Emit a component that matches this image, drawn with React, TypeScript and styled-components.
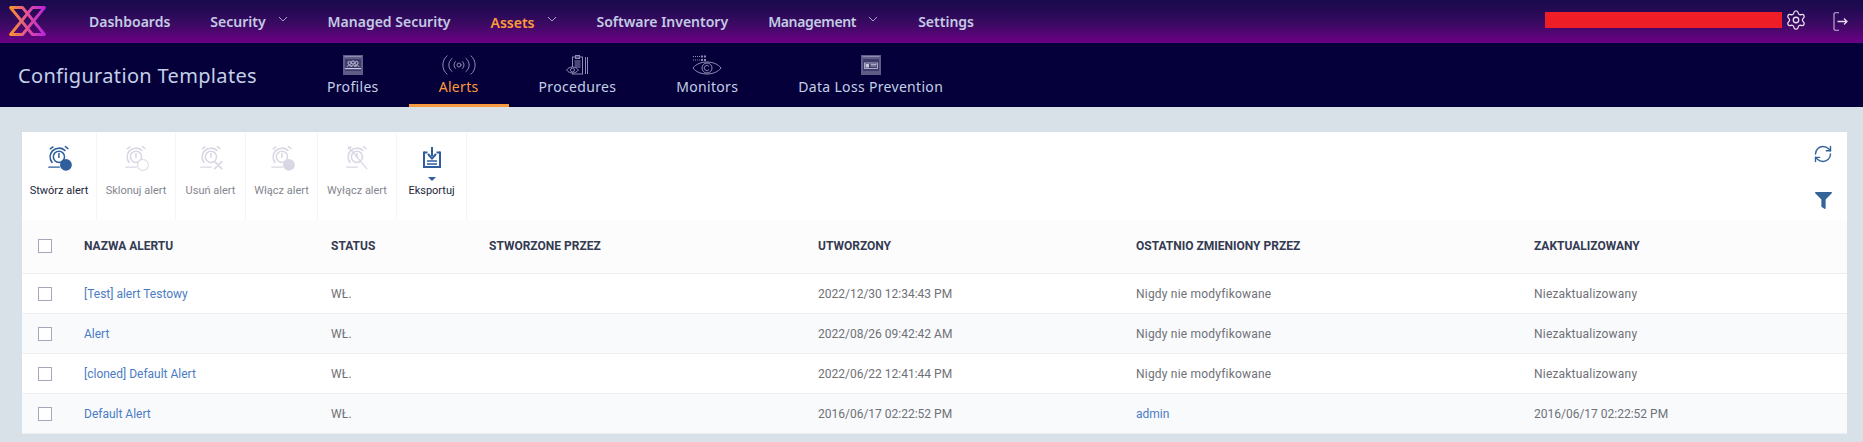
import React from "react";
import styled, { createGlobalStyle } from "styled-components";
import { Settings, RefreshCw } from "lucide-react";
import { FaFilter } from "react-icons/fa";

const Global = createGlobalStyle`
  html, body { margin: 0; padding: 0; background: #d8e0e8; height: 442px; overflow: hidden; }
  * { box-sizing: border-box; }
`;

const TopBar = styled.header`
  height: 43px;
  display: flex;
  align-items: center;
  padding: 0 15px 0 8px;
  background: linear-gradient(180deg, #1a0a4c 0%, #1e0a50 15%, #3a0a62 55%, #6c0086 100%);
`;
const Nav = styled.nav`
  display: flex;
  align-items: center;
  gap: 40px;
  margin-left: 42px;
`;
const NavItem = styled.div<{ $active?: boolean; $tight?: boolean }>`
  display: flex;
  align-items: center;
  font: 600 14px "Noto Sans", sans-serif;
  letter-spacing: ${(p) => (p.$tight ? "-0.35px" : "0")};
  color: ${(p) => (p.$active ? "#ff9a3a" : "#c3cbe4")};
  white-space: nowrap;
  padding-top: ${(p) => (p.$active ? 1 : 0)}px;
`;
const Chevron = styled.svg`
  width: 10px;
  height: 6px;
  margin: -6px 0 0 12px;
`;
const TopRight = styled.div`
  margin-left: auto;
  display: flex;
  align-items: center;
`;
const Redaction = styled.div`
  width: 237px;
  height: 16px;
  margin-top: -3px;
  background: #ef1e26;
`;
const GearWrap = styled.div`
  display: flex;
  margin: -3px 26px 0 3px;
  color: #e6e0ef;
`;
const LogoutWrap = styled.svg`
  width: 15px;
  height: 19px;
  margin-top: -1px;
`;

const SubBar = styled.div`
  height: 64px;
  display: flex;
  background: #05003a;
`;
const Title = styled.div`
  width: 297px;
  padding: 19px 0 0 18px;
  font: 400 20px "Noto Sans", sans-serif;
  letter-spacing: 0.33px;
  color: #c3d0e6;
  white-space: nowrap;
`;
const Tabs = styled.div`
  display: flex;
`;
const Tab = styled.div<{ $active?: boolean }>`
  display: flex;
  flex-direction: column;
  align-items: center;
  padding: 12px 30px 0;
  height: 64px;
  font: 400 14px "Noto Sans", sans-serif;
  letter-spacing: 0.32px;
  white-space: nowrap;
  color: ${(p) => (p.$active ? "#ff9a3a" : "#c3d0e6")};
  border-bottom: 3px solid ${(p) => (p.$active ? "#f99a3e" : "transparent")};
`;
const TabIcon = styled.svg`
  height: 20px;
  margin-bottom: 2px;
  display: block;
`;

const Main = styled.main`
  padding: 25px 16px 0 22px;
`;
const Card = styled.section`
  background: #fff;
  height: 302px;
`;
const Toolbar = styled.div`
  height: 88px;
  display: flex;
  justify-content: space-between;
`;
const Tools = styled.div`
  display: flex;
`;
const Tool = styled.div<{ $w: number; $off?: boolean }>`
  width: ${(p) => p.$w}px;
  border-right: 1px solid #f5f5f7;
  display: flex;
  flex-direction: column;
  align-items: center;
  padding-top: 14px;
  font: 400 11px Roboto, sans-serif;
  white-space: nowrap;
  color: ${(p) => (p.$off ? "#84868f" : "#23263a")};
`;
const ToolGlyph = styled.svg`
  width: 26px;
  height: 26px;
  display: block;
`;
const AlarmGlyph = styled(ToolGlyph)`
  width: 28px;
  height: 28px;
  margin: -1px 0 -1px 2px;
`;
const ToolLabel = styled.span<{ $near?: boolean }>`
  margin-top: ${(p) => (p.$near ? 3 : 12)}px;
`;
const SideActions = styled.div`
  display: flex;
  flex-direction: column;
  align-items: center;
  gap: 28px;
  padding: 12px 14px 0 0;
  color: #356499;
`;

const Row = styled.div<{ $head?: boolean; $stripe?: boolean }>`
  display: grid;
  grid-template-columns: 62px 247px 158px 329px 318px 398px 1fr;
  height: ${(p) => (p.$head ? 54 : 40)}px;
  align-items: ${(p) => (p.$head ? "start" : "center")};
  padding-top: ${(p) => (p.$head ? 19 : 0)}px;
  background: ${(p) => (p.$head ? "#fcfcfc" : p.$stripe ? "#f9fafc" : "#fff")};
  border-bottom: 1px solid #eceef1;
  font: ${(p) => (p.$head ? "700 12px" : "400 12px")} Roboto, sans-serif;
  color: ${(p) => (p.$head ? "#343a52" : "#6f7177")};
`;
const Box = styled.span`
  display: block;
  width: 14px;
  height: 14px;
  margin-left: 16px;
  background: #fff;
  border: 1px solid #a3a8ba;
`;
const Link = styled.span`
  color: #4a7cc4;
`;
const Wide = styled.span`
  letter-spacing: 0.2px;
`;

const gl = "#8f8cb4";

const ProfilesIcon = () => (
  <TabIcon viewBox="0 0 20 20" width="20">
    <rect x="0" y="0" width="20" height="20" fill="#5f5c88" />
    <rect x="1.5" y="1" width="17" height="1" fill="#8f8cb4" />
    <rect x="2" y="4" width="16" height="12" fill="#3e3b6c" />
    <g fill="none" stroke="#c8c6da" strokeWidth="0.9">
      <circle cx="6.5" cy="8" r="1.6" /><circle cx="10" cy="7.5" r="1.6" /><circle cx="13.5" cy="8" r="1.6" />
      <path d="M4 12c0-2 5-2 5 0M8 12c0-2.4 5-2.4 5 0M11.5 12c0-2 4.5-2 4.5 0" />
    </g>
    <rect x="2" y="13" width="16" height="1.2" fill="#c8c6da" />
  </TabIcon>
);
const AlertsIcon = () => (
  <TabIcon viewBox="0 0 34 20" width="34" fill="none" stroke={gl} strokeWidth="1" strokeLinecap="round">
    <circle cx="17" cy="10" r="2" />
    <path d="M13.5 6.5a4.5 4.5 0 0 0 0 7M20.5 6.5a4.5 4.5 0 0 1 0 7" />
    <path d="M10 3.5a8 8 0 0 0 0 13M24 3.5a8 8 0 0 1 0 13" />
    <path d="M5 .8a12 12 0 0 0 0 18.4M29 .8a12 12 0 0 1 0 18.4" />
  </TabIcon>
);
const ProceduresIcon = () => (
  <TabIcon viewBox="0 0 22 20" width="22" fill="none" stroke={gl} strokeWidth="1">
    <rect x="6.5" y="2" width="10" height="17" />
    <rect x="9.5" y="0.5" width="4" height="3" />
    <path d="M8.5 6h6M8.5 8h6M8.5 10h6M8.5 12h6" />
    <path d="M19.5 2v17M21.5 2v17" />
    <path d="M0.5 15c3-4 9-4 12 0c-3 4-9 4-12 0z" fill="#05003a" />
    <circle cx="6.5" cy="15" r="2" />
  </TabIcon>
);
const MonitorsIcon = () => (
  <TabIcon viewBox="0 0 30 20" width="30" fill="none" stroke={gl} strokeWidth="1">
    <path d="M1 1.5h7M1 5h7" strokeDasharray="1 1" />
    <path d="M9 1.5h5M9 5h5" strokeWidth="2" strokeDasharray="2 1" />
    <path d="M1 13c6-8 22-8 28 0c-6 8-22 8-28 0z" />
    <circle cx="15" cy="13" r="5" />
    <path d="M17 11.5a2.6 2.6 0 1 0 0 3" />
  </TabIcon>
);
const DlpIcon = () => (
  <TabIcon viewBox="0 0 20 20" width="20">
    <rect x="0" y="0" width="20" height="20" fill="#5f5c88" />
    <rect x="1.5" y="1" width="17" height="1" fill="#8f8cb4" />
    <rect x="2" y="4" width="16" height="12" fill="#3e3b6c" />
    <rect x="3.5" y="8" width="13" height="5.5" fill="none" stroke="#c8c6da" strokeWidth="0.8" />
    <rect x="4.5" y="9" width="3.5" height="3.5" fill="#c8c6da" />
    <path d="M9.5 9.5h6M9.5 11h6" stroke="#c8c6da" strokeWidth="0.8" />
  </TabIcon>
);

type Mark = "solid" | "dashed" | "cross" | "grey" | "strike";

const AlarmIcon = ({ mark, c }: { mark: Mark; c: string }) => (
  <AlarmGlyph viewBox="0 0 26 26" fill="none" stroke={c} strokeWidth="1.4" strokeLinecap="round">
    <circle cx="12" cy="11" r="5.2" />
    <path d="M5.5 16a8.5 8.5 0 0 1 .5-10.5a8.5 8.5 0 0 1 11.5-.5" strokeWidth="1.6" />
    <path d="M4 3.5L6.5 1.8M18 1.5l2.4 1.8" />
    <path d="M12 8v3.5" strokeWidth="1.4" />
    <path d="M2.5 20.5h10" strokeWidth="1.2" />
    {mark === "solid" && <circle cx="18.5" cy="18.5" r="5.5" fill={c} stroke="none" />}
    {mark === "grey" && <circle cx="18.5" cy="18.5" r="5.5" fill={c} stroke="none" />}
    {mark === "dashed" && (
      <circle cx="18.5" cy="18.5" r="5" fill="#fff" strokeWidth="1" strokeDasharray="1.2 1" />
    )}
    {mark === "cross" && <path d="M15.5 15.5l6.5 6.5M22 15.5l-6.5 6.5" strokeWidth="1.6" />}
    {mark === "strike" && <path d="M4 1.5L21 22" strokeWidth="1.2" />}
  </AlarmGlyph>
);

const ExportIcon = () => (
  <ToolGlyph viewBox="0 0 26 26">
    <path d="M5 6.5h3.5M17.5 6.5H21" stroke="#2e5f9c" strokeWidth="2" fill="none" />
    <path d="M5 5.5V21h16V5.5" stroke="#2e5f9c" strokeWidth="2" fill="none" />
    <path d="M13 1v9" stroke="#2e5f9c" strokeWidth="2" />
    <path d="M9 8l4 4.5L17 8" stroke="#2e5f9c" strokeWidth="2" fill="none" />
    <path d="M8 15h10M8 18h10" stroke="#2e5f9c" strokeWidth="1.4" />
    <path d="M4 21h18" stroke="#2e5f9c" strokeWidth="2" />
  </ToolGlyph>
);
const Caret = styled.svg`
  width: 8px;
  height: 4px;
  margin-top: 5px;
  display: block;
`;

const LogoMark = styled.svg`
  width: 39px;
  height: 32px;
  margin-top: -1px;
`;
const Logo = () => (
  <LogoMark viewBox="0 0 39 32" fill="none">
    <defs>
      <linearGradient id="lg" x1="0" y1="0" x2="39" y2="0" gradientUnits="userSpaceOnUse">
        <stop offset="0" stopColor="#ff9c18" />
        <stop offset="0.5" stopColor="#e0509a" />
        <stop offset="1" stopColor="#b41ee6" />
      </linearGradient>
    </defs>
    <path d="M2.5 2.5h12L36.5 29.5h-12z" stroke="url(#lg)" strokeWidth="2.8" strokeLinejoin="round" />
    <path d="M36.5 2.5h-12L2.5 29.5h12z" stroke="url(#lg)" strokeWidth="2.8" strokeLinejoin="round" />
  </LogoMark>
);

const chev = (
  <Chevron viewBox="0 0 10 6" fill="none" stroke="#c3cbe4" strokeWidth="0.8">
    <path d="M1 1l4 4 4-4" />
  </Chevron>
);

const tools: { label: string; w: number; mark: Mark }[] = [
  { label: "Stwórz alert", w: 75, mark: "solid" },
  { label: "Sklonuj alert", w: 79, mark: "dashed" },
  { label: "Usuń alert", w: 70, mark: "cross" },
  { label: "Włącz alert", w: 72, mark: "grey" },
  { label: "Wyłącz alert", w: 79, mark: "strike" },
];

const rows = [
  ["[Test] alert Testowy", "2022/12/30 12:34:43 PM", "Nigdy nie modyfikowane", "Niezaktualizowany"],
  ["Alert", "2022/08/26 09:42:42 AM", "Nigdy nie modyfikowane", "Niezaktualizowany"],
  ["[cloned] Default Alert", "2022/06/22 12:41:44 PM", "Nigdy nie modyfikowane", "Niezaktualizowany"],
  ["Default Alert", "2016/06/17 02:22:52 PM", "admin", "2016/06/17 02:22:52 PM"],
];

export default function App() {
  return (
    <>
      <Global />
      <TopBar>
        <Logo />
        <Nav>
          <NavItem>Dashboards</NavItem>
          <NavItem>Security{chev}</NavItem>
          <NavItem>Managed Security</NavItem>
          <NavItem $active>Assets{chev}</NavItem>
          <NavItem>Software Inventory</NavItem>
          <NavItem $tight>Management{chev}</NavItem>
          <NavItem>Settings</NavItem>
        </Nav>
        <TopRight>
          <Redaction />
          <GearWrap><Settings size={22} strokeWidth={1.4} /></GearWrap>
          <LogoutWrap viewBox="0 0 15 19" fill="none" stroke="#c9b4d8" strokeWidth="1.1">
            <path d="M6 .8H2.2Q1 .8 1 2v15q0 1.2 1.2 1.2H6" />
            <path d="M4.5 9.5h9.5M11 6.5l3 3-3 3" stroke="#e4dcec" strokeWidth="1.3" />
          </LogoutWrap>
        </TopRight>
      </TopBar>
      <SubBar>
        <Title>Configuration Templates</Title>
        <Tabs>
          <Tab><ProfilesIcon />Profiles</Tab>
          <Tab $active><AlertsIcon />Alerts</Tab>
          <Tab><ProceduresIcon />Procedures</Tab>
          <Tab><MonitorsIcon />Monitors</Tab>
          <Tab><DlpIcon />Data Loss Prevention</Tab>
        </Tabs>
      </SubBar>
      <Main>
        <Card>
          <Toolbar>
            <Tools>
              {tools.map((t, i) => (
                <Tool key={t.label} $w={t.w} $off={i > 0}>
                  <AlarmIcon mark={t.mark} c={i === 0 ? "#2e5f9c" : "#d7d8e4"} />
                  <ToolLabel>{t.label}</ToolLabel>
                </Tool>
              ))}
              <Tool $w={70}>
                <ExportIcon />
                <Caret viewBox="0 0 8 4"><path d="M0 0h8L4 4z" fill="#2e5f9c" /></Caret>
                <ToolLabel $near>Eksportuj</ToolLabel>
              </Tool>
            </Tools>
            <SideActions>
              <RefreshCw size={20} strokeWidth={1.7} />
              <FaFilter size={17} />
            </SideActions>
          </Toolbar>
          <Row $head>
            <Box />
            <span>NAZWA ALERTU</span>
            <span>STATUS</span>
            <span>STWORZONE PRZEZ</span>
            <span>UTWORZONY</span>
            <span>OSTATNIO ZMIENIONY PRZEZ</span>
            <span>ZAKTUALIZOWANY</span>
          </Row>
          {rows.map((r, i) => (
            <Row key={r[0]} $stripe={i % 2 === 1}>
              <Box />
              <Link>{r[0]}</Link>
              <Wide>WŁ.</Wide>
              <span />
              <span>{r[1]}</span>
              {r[2] === "admin" ? <Link>{r[2]}</Link> : <Wide>{r[2]}</Wide>}
              {r[3].startsWith("2016") ? <span>{r[3]}</span> : <Wide>{r[3]}</Wide>}
            </Row>
          ))}
        </Card>
      </Main>
    </>
  );
}
